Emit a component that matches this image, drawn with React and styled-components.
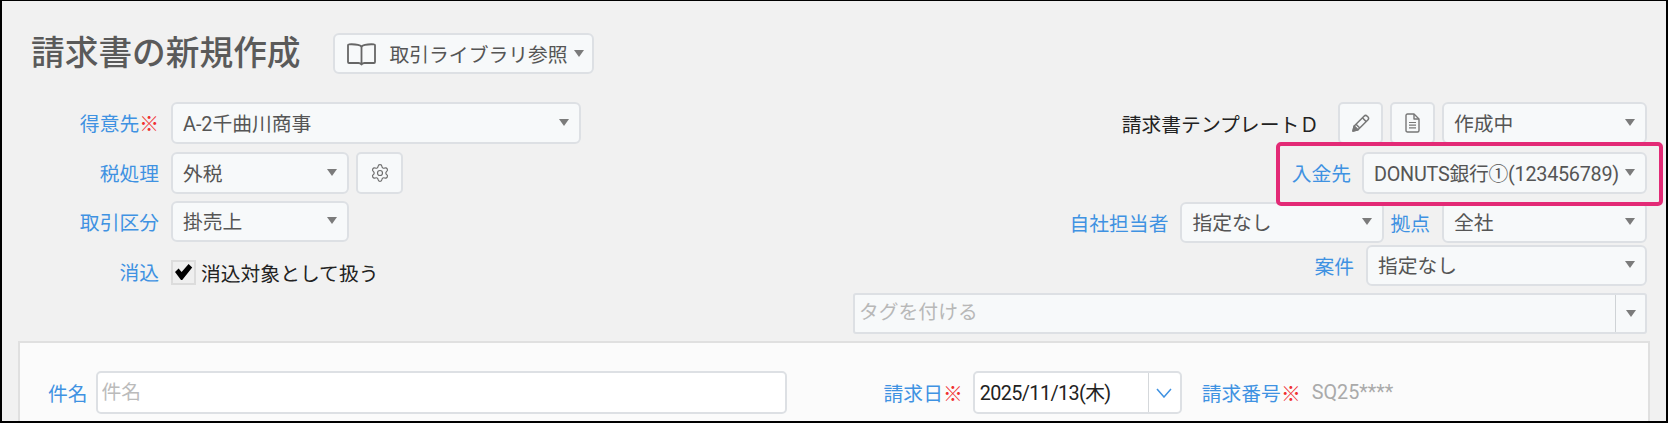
import React from "react";
import styled, { createGlobalStyle } from "styled-components";
import { Settings } from "lucide-react";

const GlobalStyle = createGlobalStyle`
	* {
		box-sizing: border-box;
	}
	html, body {
		margin: 0;
		padding: 0;
		background: #f1f1f1;
	}
	body {
		font-family: Roboto, "Noto Sans CJK JP", sans-serif;
		font-size: 19.8px;
	}
`;

const Frame = styled.div`
	width: 1668px;
	height: 423px;
	display: flex;
	flex-direction: column;
	overflow: hidden;
	background: #f1f1f1;
	border-style: solid;
	border-color: #000;
	border-width: 1px 2px 2px 2px;
`;

const Header = styled.header`
	display: flex;
	align-items: center;
	gap: 32px;
	margin-top: 32px;
	padding-left: 29px;
	height: 41px;
`;

const Title = styled.h1`
	margin: 0;
	font-size: 33.7px;
	font-weight: 500;
	line-height: 41px;
	color: #5a5a5a;
`;

const LibraryButton = styled.button`
	display: flex;
	align-items: center;
	width: 261px;
	height: 41px;
	padding: 0 8px 0 12px;
	background: #f7f9fa;
	border: 2px solid #dde0e4;
	border-radius: 6px;
	font: inherit;
	color: #555;
	span {
		margin-left: 14px;
		margin-right: auto;
		white-space: nowrap;
	}
`;

const Form = styled.div`
	display: flex;
	justify-content: space-between;
	margin-top: 28px;
	padding-right: 19px;
`;

const LeftColumn = styled.div`
	display: flex;
	flex-direction: column;
`;

const RightColumn = styled.div`
	display: flex;
	flex-direction: column;
	align-items: flex-end;
`;

const Row = styled.div`
	position: relative;
	display: flex;
	align-items: center;
	gap: ${(p) => p.$gap ?? 12}px;
	margin-top: ${(p) => p.$top ?? 0}px;
`;

const Label = styled.label`
	padding-bottom: 1px;
	color: #3f92e2;
	white-space: nowrap;
	text-align: right;
	width: ${(p) => (p.$width ? `${p.$width}px` : "auto")};
	margin-left: ${(p) => p.$left ?? 0}px;
`;

const Required = styled.span`
	color: #f03030;
`;

const Plain = styled.span`
	color: #222;
	white-space: nowrap;
`;

const Select = styled.div`
	display: flex;
	align-items: center;
	justify-content: space-between;
	width: ${(p) => p.$width}px;
	height: ${(p) => p.$height ?? 42}px;
	padding: 0 10px 2px 10px;
	background: #f7f9fa;
	border: 2px solid #dde0e4;
	border-radius: 6px;
	color: #555;
	white-space: nowrap;
	letter-spacing: ${(p) => p.$tight ?? 0}px;
`;

const Caret = styled.i`
	flex: none;
	width: 0;
	height: 0;
	border-left: 5.5px solid transparent;
	border-right: 5.5px solid transparent;
	border-top: 7px solid #7b7b7b;
`;

const IconButton = styled.button`
	display: flex;
	align-items: center;
	justify-content: center;
	width: ${(p) => p.$width ?? 45}px;
	height: ${(p) => p.$height ?? 42}px;
	padding: 0;
	margin-left: ${(p) => p.$left ?? 0}px;
	background: #f7f9fa;
	border: 2px solid #dde0e4;
	border-radius: 5px;
	color: #6f6f6f;
`;

const CheckBox = styled.div`
	display: flex;
	align-items: center;
	justify-content: center;
	width: 25px;
	height: 25px;
	margin-left: 7px;
	background: #efefef;
	border: 2px solid #dcdcdc;
`;

const Highlight = styled.div`
	position: absolute;
	z-index: 1;
	top: -10px;
	right: -16px;
	bottom: -12px;
	left: -16px;
	border: 4px solid #e32a76;
	border-radius: 5px;
	pointer-events: none;
`;

const TagField = styled.div`
	display: flex;
	width: 794px;
	height: 41px;
	background: #f7f9fa;
	border: 2px solid #dde0e4;
	border-radius: 3px;
`;

const TagText = styled.div`
	flex: 1;
	padding-left: 4px;
	line-height: 35px;
	color: #b8b8b8;
`;

const TagArrow = styled.div`
	display: flex;
	align-items: center;
	justify-content: center;
	width: 30px;
	border-left: 1px solid #cfd3d6;
`;

const Panel = styled.section`
	flex: 1;
	display: flex;
	align-items: flex-start;
	margin: 7px 16px 0 16px;
	padding: 28px 0 0 28px;
	background: #fbfbfb;
	border: 2px solid #e0e0e0;
	border-bottom: none;
`;

const PanelGroup = styled.div`
	display: flex;
	align-items: center;
	height: 43px;
	gap: ${(p) => p.$gap}px;
	margin-left: ${(p) => p.$left ?? 0}px;
`;

const TextInput = styled.input`
	width: 691px;
	height: 43px;
	padding: 0 4px;
	background: #fff;
	border: 2px solid #dde0e4;
	border-radius: 5px;
	font: inherit;
	&::placeholder {
		color: #bbb;
		opacity: 1;
	}
`;

const DateField = styled.div`
	display: flex;
	width: 209px;
	height: 43px;
	background: #fff;
	border: 2px solid #dde0e4;
	border-radius: 5px;
	color: #222;
`;

const DateValue = styled.div`
	flex: 1;
	padding-left: 5px;
	line-height: 41px;
	letter-spacing: -0.6px;
	white-space: nowrap;
`;

const DateArrow = styled.div`
	display: flex;
	align-items: center;
	justify-content: center;
	width: 32px;
	border-left: 1px solid #d5d8db;
`;

const NumberValue = styled.span`
	margin-left: 1px;
	color: #aaa;
	white-space: nowrap;
`;

function BookIcon() {
	return (
		<svg width="29" height="24" viewBox="0 0 29 24" fill="none" stroke="#666" strokeWidth="1.8" strokeLinejoin="round">
			<path d="M14.5 4.5C12.5 2.5 9 2 2 2.3C1.4 2.3 1 2.7 1 3.3V20C1 20.6 1.4 21 2 21H11.5C12.8 21 13.8 21.4 14.5 22.5C15.2 21.4 16.2 21 17.5 21H27C27.6 21 28 20.6 28 20V3.3C28 2.7 27.6 2.3 27 2.3C20 2 16.5 2.5 14.5 4.5Z" />
			<path d="M14.5 4.5V22" />
		</svg>
	);
}

function PencilIcon() {
	return (
		<svg width="19" height="19" viewBox="0 0 19 19" fill="none" stroke="#777" strokeWidth="1.5" strokeLinejoin="round">
			<path d="M13 2.2C14 1.2 15.2 1.2 16.2 2.2L16.8 2.8C17.8 3.8 17.8 5 16.8 6L7 15.8L2 17L3.2 12Z" />
			<path d="M11.4 3.8L15.2 7.6M5 10.2L8.8 14" />
			<path d="M2 17L3.2 12L7 15.8Z" fill="#777" />
		</svg>
	);
}

function FileIcon() {
	return (
		<svg width="15" height="20" viewBox="0 0 15 20" fill="none" stroke="#777" strokeWidth="1.4" strokeLinejoin="round">
			<path d="M2.5 1H9L14 6V17.5C14 18.4 13.4 19 12.5 19H2.5C1.6 19 1 18.4 1 17.5V2.5C1 1.6 1.6 1 2.5 1Z" />
			<path d="M9 1V6H14" />
			<path d="M4 9.5H11M4 12.2H11M4 14.9H11" strokeWidth="1.2" />
		</svg>
	);
}

function CheckIcon() {
	return (
		<svg width="19" height="18" viewBox="0 0 19 18">
			<path d="M1 9L4.6 5.6L7.6 9L14.6 1L18.2 4.6L8.2 17H7Z" fill="#000" />
		</svg>
	);
}

function ChevronIcon() {
	return (
		<svg width="16" height="10" viewBox="0 0 16 10" fill="none" stroke="#3f92e2" strokeWidth="1.5">
			<path d="M1 1L8 9L15 1" />
		</svg>
	);
}

function App() {
	return (
		<>
			<GlobalStyle />
			<Frame>
				<Header>
					<Title>請求書の新規作成</Title>
					<LibraryButton>
						<BookIcon />
						<span>取引ライブラリ参照</span>
						<Caret />
					</LibraryButton>
				</Header>

				<Form>
					<LeftColumn>
						<Row $gap={12}>
							<Label $width={157}>得意先<Required>※</Required></Label>
							<Select $width={410}>A-2千曲川商事<Caret /></Select>
						</Row>
						<Row $gap={12} $top={8}>
							<Label $width={157}>税処理</Label>
							<Select $width={178}>外税<Caret /></Select>
							<IconButton $width={47} $left={-5}><Settings size={20} strokeWidth={1.4} /></IconButton>
						</Row>
						<Row $gap={12} $top={7}>
							<Label $width={157}>取引区分</Label>
							<Select $width={178} $height={41}>掛売上<Caret /></Select>
						</Row>
						<Row $gap={5} $top={15}>
							<Label $width={157}>消込</Label>
							<CheckBox><CheckIcon /></CheckBox>
							<Plain>消込対象として扱う</Plain>
						</Row>
					</LeftColumn>

					<RightColumn>
						<Row $gap={7}>
							<Plain>請求書テンプレートＤ</Plain>
							<IconButton $left={12}><PencilIcon /></IconButton>
							<IconButton><FileIcon /></IconButton>
							<Select $width={205}>作成中<Caret /></Select>
						</Row>
						<Row $top={8} $gap={11}>
							<Label>入金先</Label>
							<Select $width={285} $tight={-0.25}>DONUTS銀行①(123456789)<Caret /></Select>
							<Highlight />
						</Row>
						<Row $top={8}>
							<Label>自社担当者</Label>
							<Select $width={204} $height={41}>指定なし<Caret /></Select>
							<Label $left={-6}>拠点</Label>
							<Select $width={205} $height={41}>全社<Caret /></Select>
						</Row>
						<Row $top={2}>
							<Label>案件</Label>
							<Select $width={281} $height={41}>指定なし<Caret /></Select>
						</Row>
						<Row $top={7}>
							<TagField>
								<TagText>タグを付ける</TagText>
								<TagArrow><Caret /></TagArrow>
							</TagField>
						</Row>
					</RightColumn>
				</Form>

				<Panel>
					<PanelGroup $gap={8}>
						<Label>件名</Label>
						<TextInput placeholder="件名" />
					</PanelGroup>
					<PanelGroup $gap={10} $left={97}>
						<Label>請求日<Required>※</Required></Label>
						<DateField>
							<DateValue>2025/11/13(木)</DateValue>
							<DateArrow><ChevronIcon /></DateArrow>
						</DateField>
					</PanelGroup>
					<PanelGroup $gap={10} $left={20}>
						<Label>請求番号<Required>※</Required></Label>
						<NumberValue>SQ25****</NumberValue>
					</PanelGroup>
				</Panel>
			</Frame>
		</>
	);
}

export default App;
